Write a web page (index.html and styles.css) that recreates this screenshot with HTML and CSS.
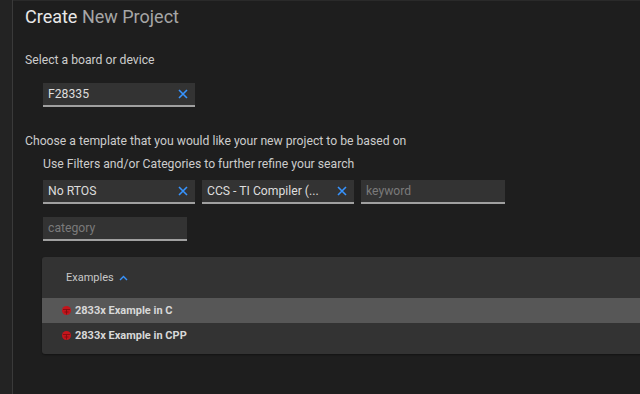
FILE: index.html
```html
<!DOCTYPE html>
<html lang="en">

<head>
  <meta charset="UTF-8">
  <title>Create New Project</title>
  <link rel="stylesheet" href="styles.css">
</head>

<body>
  <div class="gutter"></div>
  <div class="page">
    <h1><span class="strong">Create</span> New Project</h1>

    <p class="label">Select a board or device</p>
    <div class="indent">
      <div class="field wide first">
        <span class="value">F28335</span>
        <svg class="clear" width="10" height="10" viewBox="0 0 10 10"><path d="M1 1l8 8M9 1l-8 8"/></svg>
      </div>
    </div>

    <p class="label template">Choose a template that you would like your new project to be based on</p>
    <div class="indent">
      <p class="hint">Use Filters and/or Categories to further refine your search</p>
      <div class="filters">
        <div class="field wide">
          <span class="value">No RTOS</span>
          <svg class="clear" width="10" height="10" viewBox="0 0 10 10"><path d="M1 1l8 8M9 1l-8 8"/></svg>
        </div>
        <div class="field wide">
          <span class="value">CCS - TI Compiler (...</span>
          <svg class="clear" width="10" height="10" viewBox="0 0 10 10"><path d="M1 1l8 8M9 1l-8 8"/></svg>
        </div>
        <div class="field">
          <span class="placeholder">keyword</span>
        </div>
      </div>
      <div class="filters">
        <div class="field">
          <span class="placeholder">category</span>
        </div>
      </div>
    </div>

    <div class="examples">
      <div class="examples-head">
        Examples
        <svg width="9" height="6" viewBox="0 0 9 6"><path d="M1 5l3.5-3.5L8 5" stroke="#3794ff" stroke-width="1.4" fill="none"/></svg>
      </div>
      <div class="example selected">
        <svg class="chip" width="9" height="9" viewBox="0 0 9 9"><circle cx="4.5" cy="4.5" r="4.5"/><path d="M1 3.5h7M4.5 3.5v5M2.5 6h4"/></svg>
        2833x Example in C
      </div>
      <div class="example">
        <svg class="chip" width="9" height="9" viewBox="0 0 9 9"><circle cx="4.5" cy="4.5" r="4.5"/><path d="M1 3.5h7M4.5 3.5v5M2.5 6h4"/></svg>
        2833x Example in CPP
      </div>
    </div>
  </div>
</body>

</html>
```

FILE: styles.css
```css
* {
  box-sizing: border-box;
}

body {
  margin: 0;
  display: flex;
  height: 394px;
  overflow: hidden;
  background-color: #1e1e1e;
  color: #cccccc;
  font-family: Roboto, "Liberation Sans", sans-serif;
  font-size: 12.2px;
}

.gutter {
  width: 13px;
  flex-shrink: 0;
  background-color: #232323;
  border-right: 1px solid #3a3a3a;
}

.page {
  flex: 1;
  padding: 4px 0 0 12px;
  border-top: 1px solid #2a2a2a;
}

h1 {
  margin: 0;
  font-size: 18px;
  font-weight: 400;
  color: #a6a6a6;
  line-height: 24px;
}

h1 .strong {
  color: #e8e8e8;
}

.label {
  margin: 23px 0 0;
  line-height: 16px;
}

.label.template {
  margin-top: 26px;
}

.indent {
  padding-left: 18px;
}

.hint {
  margin: 7px 0 0;
  line-height: 16px;
}

.field.first {
  margin-top: 15px;
}

.filters {
  display: flex;
  gap: 7px;
  margin-top: 8px;
}

.filters + .filters {
  margin-top: 13px;
}

.field {
  width: 144px;
  height: 24px;
  display: flex;
  align-items: center;
  justify-content: space-between;
  padding: 0 7px 0 5px;
  background-color: #333333;
  border-bottom: 2px solid #a0a0a0;
}

.field.wide {
  width: 152px;
}

.value {
  color: #dddddd;
}

.placeholder {
  color: #7a7a7a;
}

.clear {
  stroke: #3794ff;
  stroke-width: 1.6;
  fill: none;
}

.examples {
  margin-top: 16px;
  margin-left: 17px;
  margin-right: -4px;
  height: 97px;
  background-color: #333333;
  border-radius: 3px;
  box-shadow: 0 1px 2px rgba(0, 0, 0, 0.4);
}

.examples-head {
  height: 41px;
  display: flex;
  align-items: center;
  gap: 5px;
  padding-left: 24px;
  font-size: 11px;
  color: #c8c8c8;
}

.example {
  height: 24px;
  display: flex;
  align-items: center;
  gap: 4px;
  padding-left: 20px;
  font-size: 11px;
  font-weight: 700;
  color: #d8d8d8;
}

.example.selected {
  background-color: #575757;
  height: 25px;
}

.chip {
  fill: #c4151c;
  stroke: #7a0c10;
  stroke-width: 0.8;
}

.chip circle {
  stroke: none;
}
```
